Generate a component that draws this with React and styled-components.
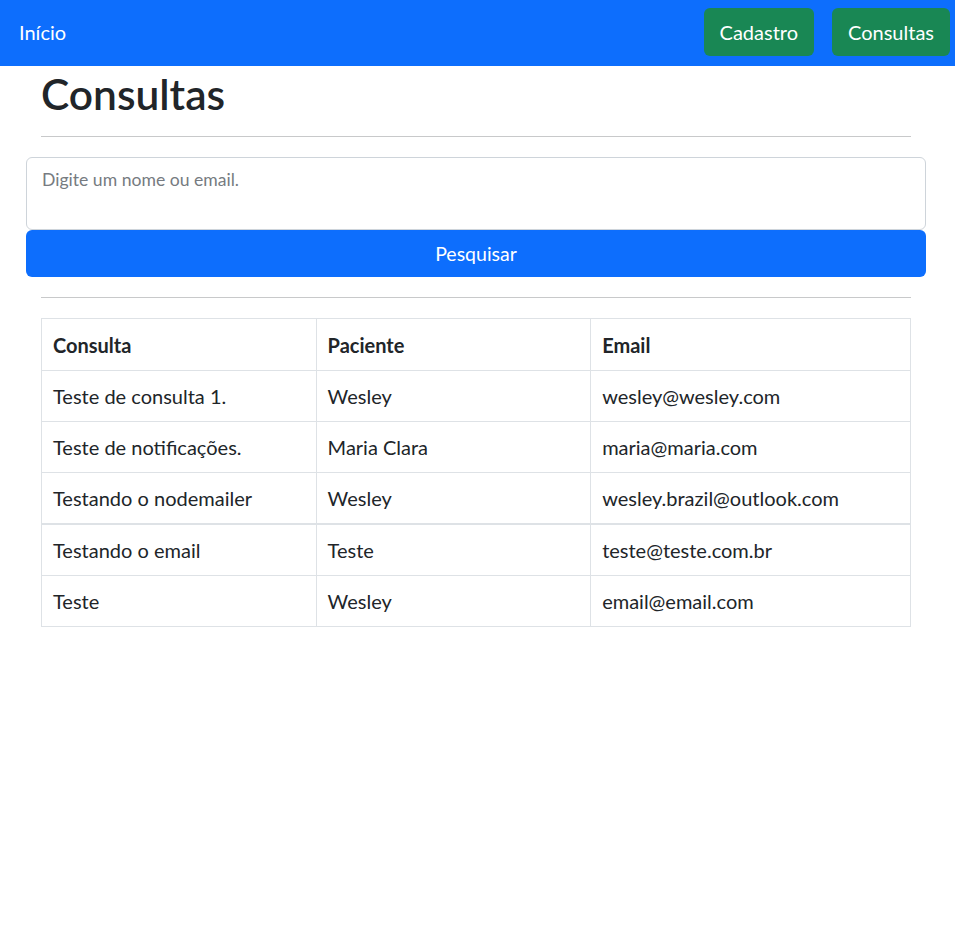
import React from "react";
import styled, { createGlobalStyle } from "styled-components";

const GlobalStyle = createGlobalStyle`
  html, body { margin: 0; padding: 0; background: #fff; }
  body {
    font-family: Lato, "Noto Sans", "Liberation Sans", sans-serif;
    color: #212529;
  }
  * { box-sizing: border-box; }
`;

const Navbar = styled.nav`
  height: 66px;
  background: #0d6efd;
  display: flex;
  align-items: center;
  justify-content: space-between;
  padding: 0 5px 2px 19px;
`;

const Brand = styled.a`
  color: #fff;
  font-size: 20px;
  text-decoration: none;
`;

const NavActions = styled.div`
  display: flex;
  gap: 18px;
`;

const NavButton = styled.button`
  height: 48px;
  padding: 0 16px;
  border: none;
  border-radius: 6px;
  background: #198754;
  color: #fff;
  font-family: inherit;
  font-size: 20px;
`;

const Main = styled.main`
  width: 900px;
  margin-left: 26px;
`;

const Inner = styled.div`
  padding: 0 15px;
`;

const Title = styled.h1`
  margin: 2px 0 0;
  font-size: 42.5px;
  font-weight: 600;
  line-height: 1.2;
`;

const Rule = styled.hr`
  margin: ${(p) => p.$top}px 0 20px;
  border: none;
  border-top: 1px solid #c8c9ca;
  height: 0;
`;

const Form = styled.form`
  display: flex;
  flex-direction: column;
`;

const SearchInput = styled.textarea`
  height: 73px;
  padding: 9px 15px 5px;
  border: 1px solid #ced4da;
  border-radius: 6px;
  font-family: inherit;
  font-size: 17.6px;
  line-height: 1.5;
  resize: none;
  color: #212529;
  &::placeholder { color: #767b81; }
`;

const SearchButton = styled.button`
  height: 47px;
  border: none;
  border-radius: 6px;
  background: #0d6efd;
  color: #fff;
  font-family: inherit;
  font-size: 19.5px;
`;

const Table = styled.table`
  width: 870px;
  border-collapse: collapse;
  font-size: 20px;
  line-height: 1.5;
`;

const Col = styled.col`
  width: ${(p) => p.$w}px;
`;

const Row = styled.tr`
  border-top: ${(p) => (p.$divider ? "2px solid #dee2e6" : "none")};
`;

const Th = styled.th`
  text-align: left;
  font-weight: 700;
  padding: 11px 11px 10px;
  border: 1px solid #dee2e6;
`;

const Td = styled.td`
  padding: 10px 11px;
  border: 1px solid #dee2e6;
`;

const rows = [
  ["Teste de consulta 1.", "Wesley", "wesley@wesley.com"],
  ["Teste de notificações.", "Maria Clara", "maria@maria.com"],
  ["Testando o nodemailer", "Wesley", "wesley.brazil@outlook.com"],
  ["Testando o email", "Teste", "teste@teste.com.br"],
  ["Teste", "Wesley", "email@email.com"],
];

export default function App() {
  return (
    <>
      <GlobalStyle />
      <Navbar>
        <Brand href="#">Início</Brand>
        <NavActions>
          <NavButton>Cadastro</NavButton>
          <NavButton>Consultas</NavButton>
        </NavActions>
      </Navbar>
      <Main>
        <Inner>
          <Title>Consultas</Title>
          <Rule $top={17} />
        </Inner>
        <Form onSubmit={(e) => e.preventDefault()}>
          <SearchInput placeholder="Digite um nome ou email." />
          <SearchButton type="submit">Pesquisar</SearchButton>
        </Form>
        <Inner>
          <Rule $top={20} />
          <Table>
            <colgroup>
              <Col $w={275} />
              <Col $w={275} />
              <Col $w={320} />
            </colgroup>
            <thead>
              <tr>
                <Th>Consulta</Th>
                <Th>Paciente</Th>
                <Th>Email</Th>
              </tr>
            </thead>
            <tbody>
              {rows.map((r, i) => (
                <Row key={i} $divider={i === 3}>
                  {r.map((c, j) => (
                    <Td key={j}>{c}</Td>
                  ))}
                </Row>
              ))}
            </tbody>
          </Table>
        </Inner>
      </Main>
    </>
  );
}
